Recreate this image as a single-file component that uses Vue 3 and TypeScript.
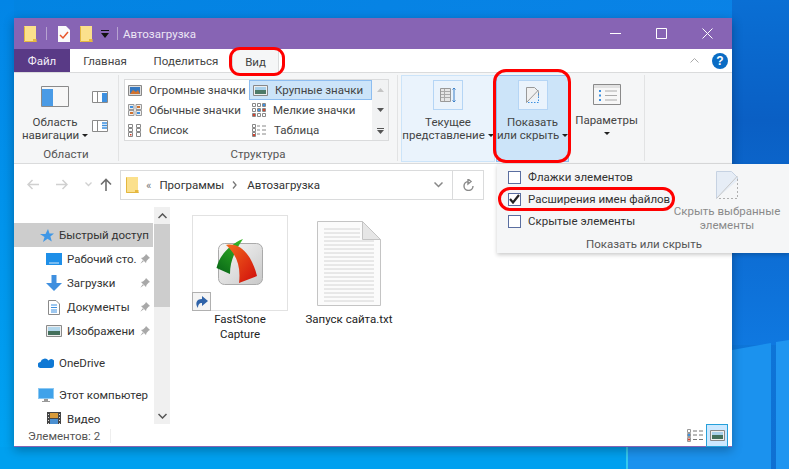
<script setup lang="ts">
const navRows = [
  { label: 'Рабочий сто.', icon: 'desk' },
  { label: 'Загрузки', icon: 'down' },
  { label: 'Документы', icon: 'doc' },
  { label: 'Изображени', icon: 'img' },
]
const docLines = Array.from({ length: 16 }, (_, i) => 20 + i * 4)
</script>

<template>
  <div class="desktop">
    <svg class="wallpaper" width="789" height="469" viewBox="0 0 789 469">
      <defs>
        <linearGradient id="wall" x1="0" y1="0" x2="1" y2="1">
          <stop offset="0" stop-color="#0284e2" />
          <stop offset="0.5" stop-color="#0a82e6" />
          <stop offset="1" stop-color="#0f6fd2" />
        </linearGradient>
        <linearGradient id="left" x1="0" y1="0" x2="0" y2="1">
          <stop offset="0" stop-color="#0285e6" />
          <stop offset="1" stop-color="#00a4f2" />
        </linearGradient>
        <linearGradient id="right" x1="0" y1="0" x2="0" y2="1">
          <stop offset="0" stop-color="#0a6fd4" />
          <stop offset="0.35" stop-color="#0a5fc4" />
          <stop offset="1" stop-color="#0f78e0" />
        </linearGradient>
      </defs>
      <rect width="789" height="469" fill="url(#wall)" />
      <rect x="0" width="14" height="469" fill="url(#left)" />
      <rect y="447" width="627" height="22" fill="#00a0ef" />
      <rect x="732" width="57" height="345" fill="url(#right)" />
      <polygon points="627,447 732,447 732,350 771,343 771,469 627,469" fill="#1b92ee" />
      <polygon points="776,342 789,340 789,469 776,469" fill="#1f95f0" />
      <rect x="626" y="447" width="2" height="22" fill="#35c8ee" />
    </svg>

    <div class="window">
      <header class="titlebar">
        <div class="qat">
          <svg width="13" height="16" viewBox="0 0 13 16"><path d="M0 0h12v16H0z" fill="#fbe08c" /><path d="M9 13h3.500v3H9z" fill="#e9b93f" /><path d="M.5.500v15h12" fill="none" stroke="#e3b73f" /></svg>
          <i class="qat-sep"></i>
          <svg class="qat-note" width="12" height="16" viewBox="0 0 12 16"><path d="M0 0h8l4 4v12H0z" fill="#fafafa" /><path d="M2 9l3 3 5-6" fill="none" stroke="#e8552a" stroke-width="1.500" /></svg>
          <svg class="qat-folder" width="13" height="16" viewBox="0 0 13 16"><path d="M0 0h12v16H0z" fill="#fbe08c" /><path d="M9 13h3.500v3H9z" fill="#e9b93f" /><path d="M.5.500v15h12" fill="none" stroke="#e3b73f" /></svg>
          <svg class="qat-drop" width="8" height="8" viewBox="0 0 8 8"><path d="M0 0h8v1H0zM0 3h8L4 8z" fill="#111" /></svg>
          <i class="qat-sep qat-sep2"></i>
        </div>
        <span class="title-text">Автозагрузка</span>
        <div class="controls">
          <svg width="11" height="11" viewBox="0 0 11 11"><path d="M0 5.500h11" stroke="#fff" /></svg>
          <svg width="11" height="11" viewBox="0 0 11 11"><path d="M.5.500h10v10H.5z" fill="none" stroke="#fff" /></svg>
          <svg width="11" height="11" viewBox="0 0 11 11"><path d="M.5.500l10 10M10.500.500l-10 10" stroke="#fff" /></svg>
        </div>
      </header>

      <nav class="tabs">
        <div class="tab tab-file">Файл</div>
        <div class="tab tab-home">Главная</div>
        <div class="tab tab-share">Поделиться</div>
        <div class="tab tab-view">
          Вид
          <span class="ring ring-tab"></span>
        </div>
        <div class="tabs-right">
          <svg width="9" height="5" viewBox="0 0 9 5"><path d="M.5 4.500l4-4 4 4" fill="none" stroke="#aaa" /></svg>
          <span class="help">?</span>
        </div>
      </nav>

      <section class="ribbon">
        <div class="group group-areas">
          <div class="group-body areas-body">
            <div class="big-btn nav-btn">
              <svg width="28" height="21" viewBox="0 0 28 21"><path d="M.5.500h27v20H.5z" fill="#f7f7f7" stroke="#8a8a8a" /><path d="M1 3h11v17H1z" fill="#4a9be6" /></svg>
              <span class="big-label">Область<br />навигации <b class="caret"></b></span>
            </div>
            <div class="pane-btns">
              <svg width="16" height="12" viewBox="0 0 16 12"><path d="M.5.500h15v11H.5z" fill="#fff" stroke="#8a8a8a" /><path d="M5.500 1v10" stroke="#8a8a8a" /><path d="M10 2h5v9h-5z" fill="#3d90e0" /></svg>
              <svg width="16" height="12" viewBox="0 0 16 12"><path d="M.5.500h15v11H.5z" fill="#fff" stroke="#8a8a8a" /><path d="M5.500 1v10" stroke="#8a8a8a" /><path d="M10 3h5M10 5.500h5M10 8h5" stroke="#3d90e0" stroke-width="1.400" /></svg>
            </div>
          </div>
          <div class="group-label">Области</div>
        </div>

        <div class="group group-layout">
          <div class="group-body">
            <div class="gallery">
              <div class="gallery-grid">
                <div class="g-item">
                  <svg width="14" height="11" viewBox="0 0 14 11"><path d="M.5.500h13v10H.5z" fill="#ddd" stroke="#888" /><path d="M2 2h10v7H2z" fill="#3478c0" /><path d="M2 9l3-4 3 2 2-2 2 4z" fill="#d2732f" /></svg>
                  Огромные значки
                </div>
                <div class="g-item g-active">
                  <svg width="15" height="11" viewBox="0 0 15 11"><path d="M.5.500h14v10H.5z" fill="#eee" stroke="#888" /><path d="M2 2h11v3H2z" fill="#a8d0ea" /><path d="M2 5h11v4H2z" fill="#4d7a68" /></svg>
                  Крупные значки
                </div>
                <div class="g-item">
                  <svg width="14" height="12" viewBox="0 0 14 12"><path d="M.5.500h5.500v5H.5zM8 .500h5.500v5H8zM.5 6.500h5.500v5H.5zM8 6.500h5.500v5H8z" fill="#eee" stroke="#999" /><path d="M2 2h3v2H2zM9 8h3v2H9z" fill="#3d90e0" /><path d="M9 2h3v2H9zM2 8h3v2H2z" fill="#d2732f" /></svg>
                  Обычные значки
                </div>
                <div class="g-item">
                  <svg width="14" height="14" viewBox="0 0 14 14"><path d="M.5.500h3v3h-3zM5.500.500h3v3h-3zM10.500.500h3v3h-3zM.5 5.500h3v3h-3zM5.500 5.500h3v3h-3zM10.500 5.500h3v3h-3zM.5 10.500h3v3h-3zM5.500 10.500h3v3h-3zM10.500 10.500h3v3h-3z" fill="#fff" stroke="#888" /><path d="M1 11h2v2H1zM11 6h2v2h-2z" fill="#d2442f" /><path d="M6 6h2v2H6zM11 1h2v2h-2z" fill="#3d90e0" /></svg>
                  Мелкие значки
                </div>
                <div class="g-item">
                  <svg width="14" height="13" viewBox="0 0 14 13"><path d="M.5.500h4v3h-4zM.5 4.500h4v3h-4zM.5 8.500h4v4h-4zM8.500.500h4v3h-4zM8.500 4.500h4v3h-4zM8.500 8.500h4v4h-4z" fill="#fff" stroke="#888" /><path d="M2 10h1.500v1.500H2z" fill="#d2442f" /></svg>
                  Список
                </div>
                <div class="g-item">
                  <svg width="15" height="13" viewBox="0 0 15 13"><path d="M.5.500h3v3h-3zM.5 4.500h3v3h-3zM.5 8.500h3v4h-3z" fill="#fff" stroke="#888" /><path d="M5 2h3M10 2h4M5 6h3M10 6h4M5 10h3M10 10h4" stroke="#888" /><path d="M1 10h2v2H1z" fill="#d2442f" /></svg>
                  Таблица
                </div>
              </div>
              <div class="gallery-scroll">
                <svg width="7" height="4" viewBox="0 0 7 4"><path d="M3.500 0L7 4H0z" fill="#c4c4c4" /></svg>
                <svg width="7" height="4" viewBox="0 0 7 4"><path d="M0 0h7L3.500 4z" fill="#555" /></svg>
                <svg width="7" height="6" viewBox="0 0 7 6"><path d="M0 0h7v1H0zM0 2h7L3.500 6z" fill="#555" /></svg>
              </div>
            </div>
          </div>
          <div class="group-label">Структура</div>
        </div>

        <div class="group group-view">
          <div class="view-btn view-current">
            <span class="icon-box">
              <svg width="16" height="16" viewBox="0 0 16 16"><path d="M.5 1.500h10v13H.5z" fill="#e6e6e6" stroke="#999" /><path d="M1 4.500h9M1 7.500h9M1 10.500h9M4.500 2v12" stroke="#aaa" /><path d="M14 1v14M12.500 2.500L14 1l1.500 1.500M12.500 13.500L14 15l1.500-1.500" fill="none" stroke="#3d80c8" /></svg>
            </span>
            <span class="big-label">Текущее<br />представление <b class="caret"></b></span>
          </div>
          <div class="view-btn view-show">
            <span class="icon-box">
              <svg width="13" height="16" viewBox="0 0 13 16"><path d="M.5 15.500V.5h8l4 4v5" fill="#f0f0f0" stroke="#999" /><path d="M.5 15.500L12.500 3" fill="none" stroke="#999" /><path d="M2 15.500h10.500V5" fill="none" stroke="#3d90e0" stroke-dasharray="1.500 1.500" /></svg>
            </span>
            <span class="big-label">Показать<br />или скрыть <b class="caret"></b></span>
            <span class="ring ring-show"></span>
          </div>
          <div class="big-btn params">
            <svg width="28" height="21" viewBox="0 0 28 21"><path d="M.5.500h27v20H.5z" fill="#f7f7f7" stroke="#8a8a8a" /><path d="M1 1h26v3H1z" fill="#e2e2e2" /><path d="M6 6h2v2H6zM6 10.500h2v2H6zM6 15h2v2H6z" fill="#3d90e0" /><path d="M12 7h12M12 11.500h12M12 16h12" stroke="#aaa" /></svg>
            <span class="big-label">Параметры<br /><b class="caret"></b></span>
          </div>
        </div>
      </section>

      <div class="addressbar">
        <div class="arrows">
          <svg width="12" height="11" viewBox="0 0 12 11"><path d="M12 5.500H1M5.500 1L1 5.500 5.500 10" fill="none" stroke="#d0d0d0" stroke-width="1.500" /></svg>
          <svg width="12" height="11" viewBox="0 0 12 11"><path d="M0 5.500h11M6.500 1L11 5.500 6.500 10" fill="none" stroke="#d0d0d0" stroke-width="1.500" /></svg>
          <svg class="arrow-drop" width="7" height="5" viewBox="0 0 7 5"><path d="M.5.500l3 3 3-3" fill="none" stroke="#d0d0d0" stroke-width="1.300" /></svg>
          <svg class="arrow-up" width="12" height="13" viewBox="0 0 12 13"><path d="M6 13V1.500M1 6.500l5-5 5 5" fill="none" stroke="#6e6e6e" stroke-width="1.600" /></svg>
        </div>
        <div class="address">
          <svg width="13" height="16" viewBox="0 0 13 16"><path d="M0 0h12v16H0z" fill="#fbe08c" /><path d="M9 13h3.500v3H9z" fill="#e9b93f" /><path d="M.5.500v15h12" fill="none" stroke="#e3b73f" /></svg>
          <span class="crumb-mark">«</span>
          <span class="crumb">Программы</span>
          <svg class="crumb-sep" width="5" height="8" viewBox="0 0 5 8"><path d="M1 .500l3 3.500-3 3.500" fill="none" stroke="#777" stroke-width="1.300" /></svg>
          <span class="crumb">Автозагрузка</span>
          <svg class="addr-chev" width="9" height="6" viewBox="0 0 9 6"><path d="M.5.500l4 4 4-4" fill="none" stroke="#888" stroke-width="1.500" /></svg>
          <div class="refresh">
            <svg width="11" height="12" viewBox="0 0 11 12"><path d="M5.500 2.500a4.500 4.500 0 1 0 4.500 4.500M5 0v5L8 2.500z" fill="none" stroke="#8a8a8a" stroke-width="1.400" /></svg>
          </div>
        </div>
      </div>

      <div class="main">
        <aside class="nav">
          <div class="nav-list">
            <div class="nav-row nav-quick">
              <svg width="14" height="13" viewBox="0 0 14 13"><path d="M8 0l1.500 4.500H14l-3.600 3 1.400 5L7.500 9.700 3 13l1.500-5L0 5h5.500z" fill="#3f97e6" /></svg>
              <span>Быстрый доступ</span>
            </div>
            <div v-for="row in navRows" :key="row.label" class="nav-row nav-sub">
              <span class="nav-icon">
                <svg v-if="row.icon === 'desk'" width="16" height="12" viewBox="0 0 16 12"><path d="M0 0h16v12H0z" fill="#1e8fe8" /><path d="M3 10h10" stroke="#fff" stroke-width=".8" /></svg>
                <svg v-else-if="row.icon === 'down'" width="16" height="16" viewBox="0 0 16 16"><path d="M5.500 0h5v8H16l-8 8-8-8h5.500z" fill="#3f8fdf" /></svg>
                <svg v-else-if="row.icon === 'doc'" width="12" height="15" viewBox="0 0 12 15"><path d="M.5.500h7.500l3.500 3.500v10.500H.5z" fill="#fff" stroke="#8a8a8a" /><path d="M3 5h6M3 7.500h6M3 10h6M3 12h6" stroke="#3d90e0" /></svg>
                <svg v-else width="16" height="12" viewBox="0 0 16 12"><path d="M.5.500h15v11H.5z" fill="#eee" stroke="#8a8a8a" /><path d="M2 2h12v4H2z" fill="#b3d7ec" /><path d="M2 6h12v4H2z" fill="#44705c" /></svg>
              </span>
              <span class="nav-text">{{ row.label }}</span>
              <svg class="pin" width="10" height="10" viewBox="0 0 10 10"><path d="M6 0l4 4-1.200.6L6.500 7 6 9 1 4l2-.5L5.400 1.200zM2.800 6.200L.3 9.700l3.500-2.500z" fill="#a8a8a8" /></svg>
            </div>
            <div class="nav-row nav-top nav-gap">
              <svg width="16" height="10" viewBox="0 0 16 10"><path d="M3 10a3 3 0 0 1-.500-6A4.500 4.500 0 0 1 10.500 2.500 3.500 3.500 0 0 1 16 7a3 3 0 0 1-3 3z" fill="#0f78d4" /></svg>
              <span>OneDrive</span>
            </div>
            <div class="nav-row nav-top nav-gap">
              <svg width="16" height="14" viewBox="0 0 16 14"><path d="M0 0h16v11H0z" fill="#8cc8f2" /><path d="M1 1h14v9H1z" fill="#3fa2ea" /><path d="M6 11h4v2H6zM4 13h8v1H4z" fill="#9a9a9a" /></svg>
              <span>Этот компьютер</span>
            </div>
            <div class="nav-row nav-sub">
              <span class="nav-icon">
                <svg width="14" height="14" viewBox="0 0 14 14"><path d="M0 0h14v14H0z" fill="#444" /><path d="M3 1h8v5H3z" fill="#d79a3a" /><path d="M3 7h8v6H3z" fill="#4a8fd0" /><path d="M1 2h1v1H1zM1 5h1v1H1zM1 8h1v1H1zM1 11h1v1H1zM12 2h1v1h-1zM12 5h1v1h-1zM12 8h1v1h-1zM12 11h1v1h-1z" fill="#ddd" /></svg>
              </span>
              <span class="nav-text">Видео</span>
            </div>
          </div>
          <div class="nav-scroll">
            <div class="nav-scroll-btn">
              <svg width="9" height="6" viewBox="0 0 9 6"><path d="M.5 5l4-4 4 4" fill="none" stroke="#555" stroke-width="1.500" /></svg>
            </div>
            <div class="nav-thumb"></div>
            <div class="nav-scroll-btn nav-scroll-end">
              <svg width="9" height="6" viewBox="0 0 9 6"><path d="M.5 1l4 4 4-4" fill="none" stroke="#555" stroke-width="1.500" /></svg>
            </div>
          </div>
        </aside>

        <div class="files">
          <div class="file file-app">
            <div class="thumb">
              <svg width="96" height="96" viewBox="0 0 96 96">
                <defs>
                  <linearGradient id="tile" x1="0" y1="0" x2="1" y2="1">
                    <stop offset="0" stop-color="#f8f8f8" />
                    <stop offset="1" stop-color="#c8c8c8" />
                  </linearGradient>
                  <linearGradient id="gr" x1="0.8" y1="0" x2="0.2" y2="1">
                    <stop offset="0" stop-color="#35b526" />
                    <stop offset="1" stop-color="#0a6a18" />
                  </linearGradient>
                  <linearGradient id="rd" x1="0" y1="0" x2="1" y2="1">
                    <stop offset="0" stop-color="#f46a1c" />
                    <stop offset="1" stop-color="#cf0c0c" />
                  </linearGradient>
                </defs>
                <rect x="26.500" y="28.500" width="44" height="41" rx="6" fill="url(#tile)" stroke="#aaa" />
                <path d="M51 24C38 29 27 41 24.500 53L38 59C38 47 42 37 51 24Z" fill="url(#gr)" />
                <path d="M34 30C49 27 60 41 65 61L47 68C49 52 45 40 34 30Z" fill="url(#rd)" />
              </svg>
              <span class="shortcut">
                <svg width="14" height="14" viewBox="0 0 14 14"><path d="M7 1l6 5-6 5V8C4 8 3 10 3 13 0 9 1 4 7 4z" fill="#2e62a8" /></svg>
              </span>
            </div>
            <div class="file-name">FastStone<br />Capture</div>
          </div>
          <div class="file file-txt">
            <svg class="doc-icon" width="64" height="85" viewBox="0 0 64 85">
              <path d="M.5.500h45l18 18v66H.5z" fill="#fbfbfb" stroke="#c4c4c4" />
              <path v-for="y in docLines" :key="y" :d="`M7 ${y}h50`" stroke="#d4d4d4" />
              <path d="M7 8h36M7 12h36M7 16h36" stroke="#d4d4d4" />
              <path d="M45.500.500v18h18z" fill="#e6e6e6" stroke="#c4c4c4" />
            </svg>
            <div class="file-name">Запуск сайта.txt</div>
          </div>
        </div>
      </div>

      <footer class="statusbar">
        <span class="status-text">Элементов: 2</span>
        <i class="status-sep"></i>
        <div class="status-views">
          <svg width="16" height="13" viewBox="0 0 16 13"><path d="M.5.500h3v3h-3zM.5 4.500h3v3h-3zM.5 8.500h3v4h-3z" fill="#fff" stroke="#999" /><path d="M6 2h4M12 2h4M6 6h4M12 6h4M6 10.500h4M12 10.500h4" stroke="#777" /><path d="M1 5h2v2H1z" fill="#3d90e0" /><path d="M1 9.500h2v2H1z" fill="#d2442f" /></svg>
          <span class="view-active">
            <svg width="15" height="11" viewBox="0 0 15 11"><path d="M.5.500h14v10H.5z" fill="#eee" stroke="#888" /><path d="M2 2h11v3H2z" fill="#a8d0ea" /><path d="M2 5h11v4H2z" fill="#44705c" /></svg>
          </span>
        </div>
      </footer>
    </div>

    <div class="flyout">
      <div class="fly-top">
        <div class="fly-checks">
          <div class="check-row"><span class="check"></span>Флажки элементов</div>
          <div class="check-row check-ext">
            <span class="check">
              <svg width="11" height="10" viewBox="0 0 11 10"><path d="M1 5l3 3.500L10 1" fill="none" stroke="#222" stroke-width="2.200" /></svg>
            </span>
            Расширения имен файлов
            <span class="ring ring-ext"></span>
          </div>
          <div class="check-row"><span class="check"></span>Скрытые элементы</div>
        </div>
        <div class="fly-hide">
          <svg width="22" height="28" viewBox="0 0 22 28"><path d="M.5 27.500V.5h15l6 6v3" fill="#e6edf6" stroke="#c6d2e2" /><path d="M.5 27.500L21.500 5" fill="none" stroke="#c6c6c6" /><path d="M3 27.500h18.500V8" fill="none" stroke="#b0b0b0" stroke-dasharray="2 2" /></svg>
          <span>Скрыть выбранные<br />элементы</span>
        </div>
      </div>
      <div class="fly-label">Показать или скрыть</div>
    </div>
  </div>
</template>

<style>
html,
body {
  margin: 0;
  background: #0a82e6;
}
</style>

<style scoped>
.desktop {
  position: relative;
  width: 789px;
  height: 469px;
  overflow: hidden;
  padding: 18px 0 0 14px;
  box-sizing: border-box;
  font-family: 'Roboto', 'Noto Sans', sans-serif;
  font-size: 11.5px;
  color: #333;
}

.wallpaper {
  position: absolute;
  left: 0;
  top: 0;
}

.window {
  position: relative;
  width: 718px;
  height: 429px;
  display: flex;
  flex-direction: column;
  background: #fff;
  border-bottom: 1px solid #8764b4;
  box-sizing: border-box;
  box-shadow: 0 3px 10px rgba(0, 0, 0, 0.3);
}

.titlebar {
  height: 31px;
  flex: none;
  background: #8764b4;
  display: flex;
  align-items: center;
  padding-left: 10px;
}

.qat {
  display: flex;
  align-items: center;
}

.qat-sep {
  width: 1px;
  height: 13px;
  background: #b7a3d1;
  margin: 0 11px 0 9px;
}

.qat-sep2 {
  margin: 0 7px 0 8px;
}

.qat-note {
  margin-right: 10px;
}

.qat-drop {
  margin-left: 8px;
}

.title-text {
  color: #ece6f4;
  padding-top: 1px;
  margin-left: -2px;
}

.controls {
  margin-left: auto;
  display: flex;
  gap: 35px;
  padding-right: 19px;
}

.tabs {
  height: 23px;
  flex: none;
  display: flex;
  align-items: stretch;
  background: #fff;
  position: relative;
}

.tab {
  display: flex;
  align-items: center;
  justify-content: center;
  position: relative;
  color: #444;
}

.tab-file {
  width: 56px;
  background: #593a86;
  color: #f2eef8;
}

.tab-home {
  width: 70px;
}

.tab-share {
  width: 92px;
}

.tab-view {
  width: 47px;
  background: #f5f6f7;
  border: 1px solid #dadbdc;
  border-bottom: none;
  box-sizing: border-box;
  z-index: 1;
  height: 24px;
}

.tabs-right {
  margin-left: auto;
  display: flex;
  align-items: center;
  gap: 13px;
  padding-right: 4px;
}

.help {
  width: 16px;
  height: 16px;
  border-radius: 50%;
  background: #0a6cc4;
  color: #fff;
  font: bold 12px/16px 'Liberation Sans', sans-serif;
  text-align: center;
}

.ring {
  position: absolute;
  border: 3px solid #f00;
  box-sizing: border-box;
  z-index: 5;
  pointer-events: none;
}

.ring-tab {
  left: -4px;
  right: -7px;
  top: -3px;
  bottom: -3px;
  border-radius: 11px;
}

.ring-show {
  left: -4px;
  right: -3px;
  top: -7px;
  bottom: -2px;
  border-radius: 13px;
}

.ring-ext {
  left: -10px;
  top: -1px;
  width: 177px;
  bottom: -1px;
  border-radius: 12px;
}

.ribbon {
  height: 92px;
  flex: none;
  box-sizing: border-box;
  display: flex;
  background: #f5f6f7;
  border-top: 1px solid #dadbdc;
  border-bottom: 1px solid #dadbdc;
}

.group {
  display: flex;
  flex-direction: column;
  border-right: 1px solid #e2e3e4;
  margin: 2px 0;
  box-sizing: border-box;
}

.group-body {
  height: 73px;
}

.group-label {
  text-align: center;
  color: #555;
  line-height: 14px;
}

.group-areas {
  width: 105px;
}

.areas-body {
  display: flex;
}

.big-btn {
  display: flex;
  flex-direction: column;
  align-items: center;
}

.nav-btn {
  width: 78px;
  padding: 11px 0 0 4px;
  box-sizing: border-box;
}

.big-label {
  display: block;
  text-align: center;
  line-height: 13px;
  margin-top: 9px;
  color: #444;
  white-space: nowrap;
}

.caret {
  display: inline-block;
  vertical-align: middle;
  border-left: 3px solid transparent;
  border-right: 3px solid transparent;
  border-top: 3px solid #222;
}

.pane-btns {
  display: flex;
  flex-direction: column;
  gap: 17px;
  padding-top: 16px;
}

.group-layout {
  width: 279px;
}

.gallery {
  margin: 4px 0 0 5px;
  width: 265px;
  height: 62px;
  display: flex;
  background: #fff;
  border: 1px solid #dadbdc;
  box-sizing: border-box;
}

.gallery-grid {
  width: 247px;
  display: grid;
  grid-template-columns: 124px 123px;
  grid-auto-rows: 20px;
}

.g-item {
  display: flex;
  align-items: center;
  gap: 7px;
  padding-left: 3px;
  white-space: nowrap;
  box-sizing: border-box;
  color: #444;
}

.g-active {
  background: #cce4f9;
  border: 1px solid #8dbdf0;
}

.gallery-scroll {
  flex: 1;
  background: #f1f2f3;
  display: flex;
  flex-direction: column;
  align-items: center;
  justify-content: space-between;
  padding: 8px 0 6px;
  box-sizing: border-box;
}

.group-view {
  flex: 1;
  flex-direction: row;
  align-items: stretch;
  border-right: none;
  padding-left: 3px;
  position: relative;
}

.view-btn {
  position: relative;
  display: flex;
  flex-direction: column;
  align-items: center;
  box-sizing: border-box;
  margin-bottom: 0;
  height: 87px;
}

.view-current {
  width: 94px;
  background: #eaf3fc;
  border: 1px solid #cce4f9;
  margin-right: 1px;
}

.view-show {
  width: 73px;
  background: #cce4f9;
  border: 1px solid #8dbdf0;
}

.icon-box {
  width: 30px;
  height: 30px;
  margin-top: 4px;
  background: #eaf3fc;
  border: 1px solid #b5d5f5;
  box-sizing: border-box;
  display: flex;
  align-items: center;
  justify-content: center;
}

.view-btn .big-label {
  margin-top: 6px;
}

.params {
  width: 76px;
  padding-top: 9px;
  box-sizing: border-box;
  border-right: 1px solid #e2e3e4;
}

.addressbar {
  height: 43px;
  flex: none;
  display: flex;
  padding-top: 6px;
  box-sizing: border-box;
}

.arrows {
  width: 106px;
  padding: 9px 0 0 13px;
  box-sizing: border-box;
  display: flex;
  align-items: flex-start;
  gap: 17px;
  height: 30px;
}

.arrow-drop {
  margin-top: 3px;
}

.arrow-up {
  margin: -1px 0 0 -9px;
}

.address {
  width: 364px;
  height: 30px;
  border: 1px solid #dadbdc;
  box-sizing: border-box;
  display: flex;
  align-items: center;
  padding-left: 5px;
  color: #333;
}

.crumb-mark {
  margin: 0 8px 0 7px;
  color: #777;
  line-height: 12px;
}

.crumb-sep {
  margin: 0 10px 0 8px;
}

.addr-chev {
  margin-left: auto;
  margin-right: 9px;
}

.refresh {
  width: 30px;
  height: 100%;
  border-left: 1px solid #dadbdc;
  display: flex;
  align-items: center;
  justify-content: center;
}

.main {
  height: 217px;
  flex: none;
  display: flex;
}

.nav {
  width: 156px;
  display: flex;
  overflow: hidden;
}

.nav-list {
  width: 140px;
  padding-top: 16px;
  flex: none;
}

.nav-row {
  height: 24px;
  display: flex;
  align-items: center;
  white-space: nowrap;
  color: #333;
}

.nav-quick {
  background: #cdcdcd;
  padding-left: 26px;
  gap: 5px;
  width: 139px;
  box-sizing: border-box;
}

.nav-sub {
  padding-left: 32px;
}

.nav-icon {
  width: 16px;
  flex: none;
  display: flex;
  justify-content: center;
}

.nav-text {
  margin-left: 5px;
  width: 70px;
}

.pin {
  margin-left: 3px;
}

.nav-top {
  padding-left: 24px;
  gap: 5px;
}

.nav-gap {
  margin-top: 8px;
}

.nav-scroll {
  width: 16px;
  background: #f0f0f0;
  display: flex;
  flex-direction: column;
}

.nav-scroll-btn {
  height: 17px;
  display: flex;
  align-items: center;
  justify-content: center;
}

.nav-scroll-end {
  margin-top: auto;
}

.nav-thumb {
  height: 83px;
  background: #cdcdcd;
}

.files {
  flex: 1;
  padding: 8px 0 0 22px;
  display: flex;
  align-items: flex-start;
}

.file {
  display: flex;
  flex-direction: column;
  align-items: center;
}

.file-name {
  color: #222;
  text-align: center;
  line-height: 15px;
  margin-top: 1px;
  white-space: nowrap;
}

.thumb {
  position: relative;
  width: 96px;
  height: 96px;
  border: 1px solid #e2e2e2;
  box-sizing: border-box;
}

.thumb > svg {
  display: block;
  margin: -1px;
}

.shortcut {
  position: absolute;
  left: -1px;
  bottom: -1px;
  width: 19px;
  height: 19px;
  box-sizing: border-box;
  background: #f4f4f4;
  border: 1px solid #b0b0b0;
  display: flex;
  align-items: center;
  justify-content: center;
}

.file-txt {
  margin-left: 3px;
  width: 116px;
}

.doc-icon {
  display: block;
  margin: 6px 0 5px;
}

.statusbar {
  flex: 1;
  display: flex;
  align-items: center;
  padding-left: 14px;
  color: #555;
}

.status-sep {
  width: 1px;
  height: 14px;
  background: #eee;
  margin-left: 10px;
}

.status-views {
  margin-left: auto;
  display: flex;
  align-items: center;
  gap: 3px;
  padding-right: 4px;
  height: 100%;
}

.view-active {
  width: 22px;
  height: 23px;
  background: #cce8ff;
  border: 1px solid #26a0da;
  box-sizing: border-box;
  display: flex;
  align-items: center;
  justify-content: center;
}

.flyout {
  position: absolute;
  left: 497px;
  top: 164px;
  width: 292px;
  height: 89px;
  background: #f5f6f7;
  box-shadow: 0 2px 4px rgba(0, 0, 0, 0.2);
  display: flex;
  flex-direction: column;
  z-index: 2;
}

.fly-top {
  display: flex;
  height: 72px;
}

.fly-checks {
  padding: 2px 0 0 11px;
  width: 178px;
  box-sizing: border-box;
}

.check-row {
  position: relative;
  display: flex;
  align-items: center;
  height: 22px;
  color: #333;
  white-space: nowrap;
}

.check {
  width: 13px;
  height: 13px;
  background: #fff;
  border: 1px solid #5a6ea0;
  box-sizing: border-box;
  margin-right: 7px;
  display: flex;
  align-items: center;
  justify-content: center;
  flex: none;
}

.fly-hide {
  flex: 1;
  display: flex;
  flex-direction: column;
  align-items: center;
  padding-top: 7px;
  color: #8a8a8a;
  text-align: center;
  line-height: 14px;
  margin-left: -10px;
  white-space: nowrap;
}

.fly-hide svg {
  margin-bottom: 5px;
}

.fly-label {
  width: 294px;
  text-align: center;
  color: #555;
  line-height: 16px;
}
</style>
